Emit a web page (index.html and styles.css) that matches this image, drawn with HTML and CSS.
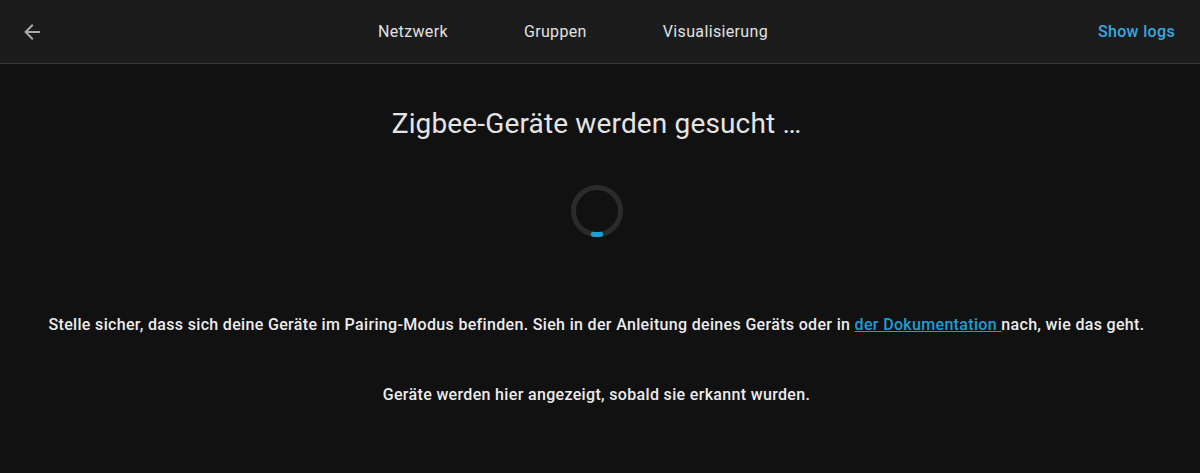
FILE: index.html
```html
<!DOCTYPE html>
<html lang="de">
<head>
<meta charset="utf-8">
<link rel="stylesheet" href="styles.css">
</head>
<body>
<header class="toolbar">
  <button class="back" aria-label="Zurück">
    <svg viewBox="0 0 24 24" width="24" height="24"><path d="M20,11V13H8L13.5,18.5L12.08,19.92L4.16,12L12.08,4.08L13.5,5.5L8,11H20Z" fill="currentColor"/></svg>
  </button>
  <nav class="tabs">
    <a class="tab">Netzwerk</a>
    <a class="tab">Gruppen</a>
    <a class="tab">Visualisierung</a>
  </nav>
  <a class="logs">Show logs</a>
</header>
<main class="content">
  <h1 class="title">Zigbee-Geräte werden gesucht …</h1>
  <div class="spinner">
    <svg viewBox="0 0 52 52" width="52" height="52">
      <circle cx="26" cy="26" r="23.5" fill="none" stroke="#2b2b2b" stroke-width="5"/>
      <path d="M22.3 49.2 A23.5 23.5 0 0 0 29.7 49.2" fill="none" stroke="#1aa0d6" stroke-width="5" stroke-linecap="round"/>
    </svg>
  </div>
  <p class="text">Stelle sicher, dass sich deine Geräte im Pairing-Modus befinden. Sieh in der Anleitung deines Geräts oder in <a class="doc">der Dokumentation </a>nach, wie das geht.</p>
  <p class="text second">Geräte werden hier angezeigt, sobald sie erkannt wurden.</p>
</main>
</body>
</html>
```

FILE: styles.css
```css
html, body {
  margin: 0;
  padding: 0;
  background: #111111;
  font-family: Roboto, "Noto Sans", sans-serif;
  color: #e1e1e1;
}
.toolbar {
  height: 64px;
  box-sizing: border-box;
  background: #1c1c1c;
  border-bottom: 1px solid #3a3a3a;
  display: flex;
  align-items: center;
}
.back {
  background: none;
  border: 0;
  padding: 0;
  margin-left: 20px;
  width: 24px;
  height: 24px;
  color: #a8a8a8;
  display: flex;
}
.tabs {
  display: flex;
  margin-left: 322px;
}
.tab {
  font-size: 16px;
  letter-spacing: 0.35px;
  color: #e1e1e1;
  padding: 0 38px;
  line-height: 64px;
}
.tab:first-child { padding-left: 12px; }
.logs {
  margin-left: auto;
  margin-right: 25px;
  font-size: 16px;
  font-weight: 500;
  letter-spacing: 0.35px;
  color: #35a9e0;
}
.content {
  display: flex;
  flex-direction: column;
  align-items: center;
  padding-right: 7px;
}
.title {
  margin: 42px 0 0;
  font-size: 28px;
  font-weight: 400;
  line-height: 36px;
  color: #e4e4e4;
  letter-spacing: 0.15px;
}
.spinner {
  margin-top: 43px;
  width: 52px;
  height: 52px;
  display: flex;
}
.text {
  margin: 76px 0 0;
  font-size: 16px;
  font-weight: 500;
  letter-spacing: 0.33px;
  line-height: 24px;
  color: #ececec;
  text-align: center;
}
.second {
  margin-top: 46px;
}
.doc {
  color: #1a9fd5;
  text-decoration: underline;
}
```
